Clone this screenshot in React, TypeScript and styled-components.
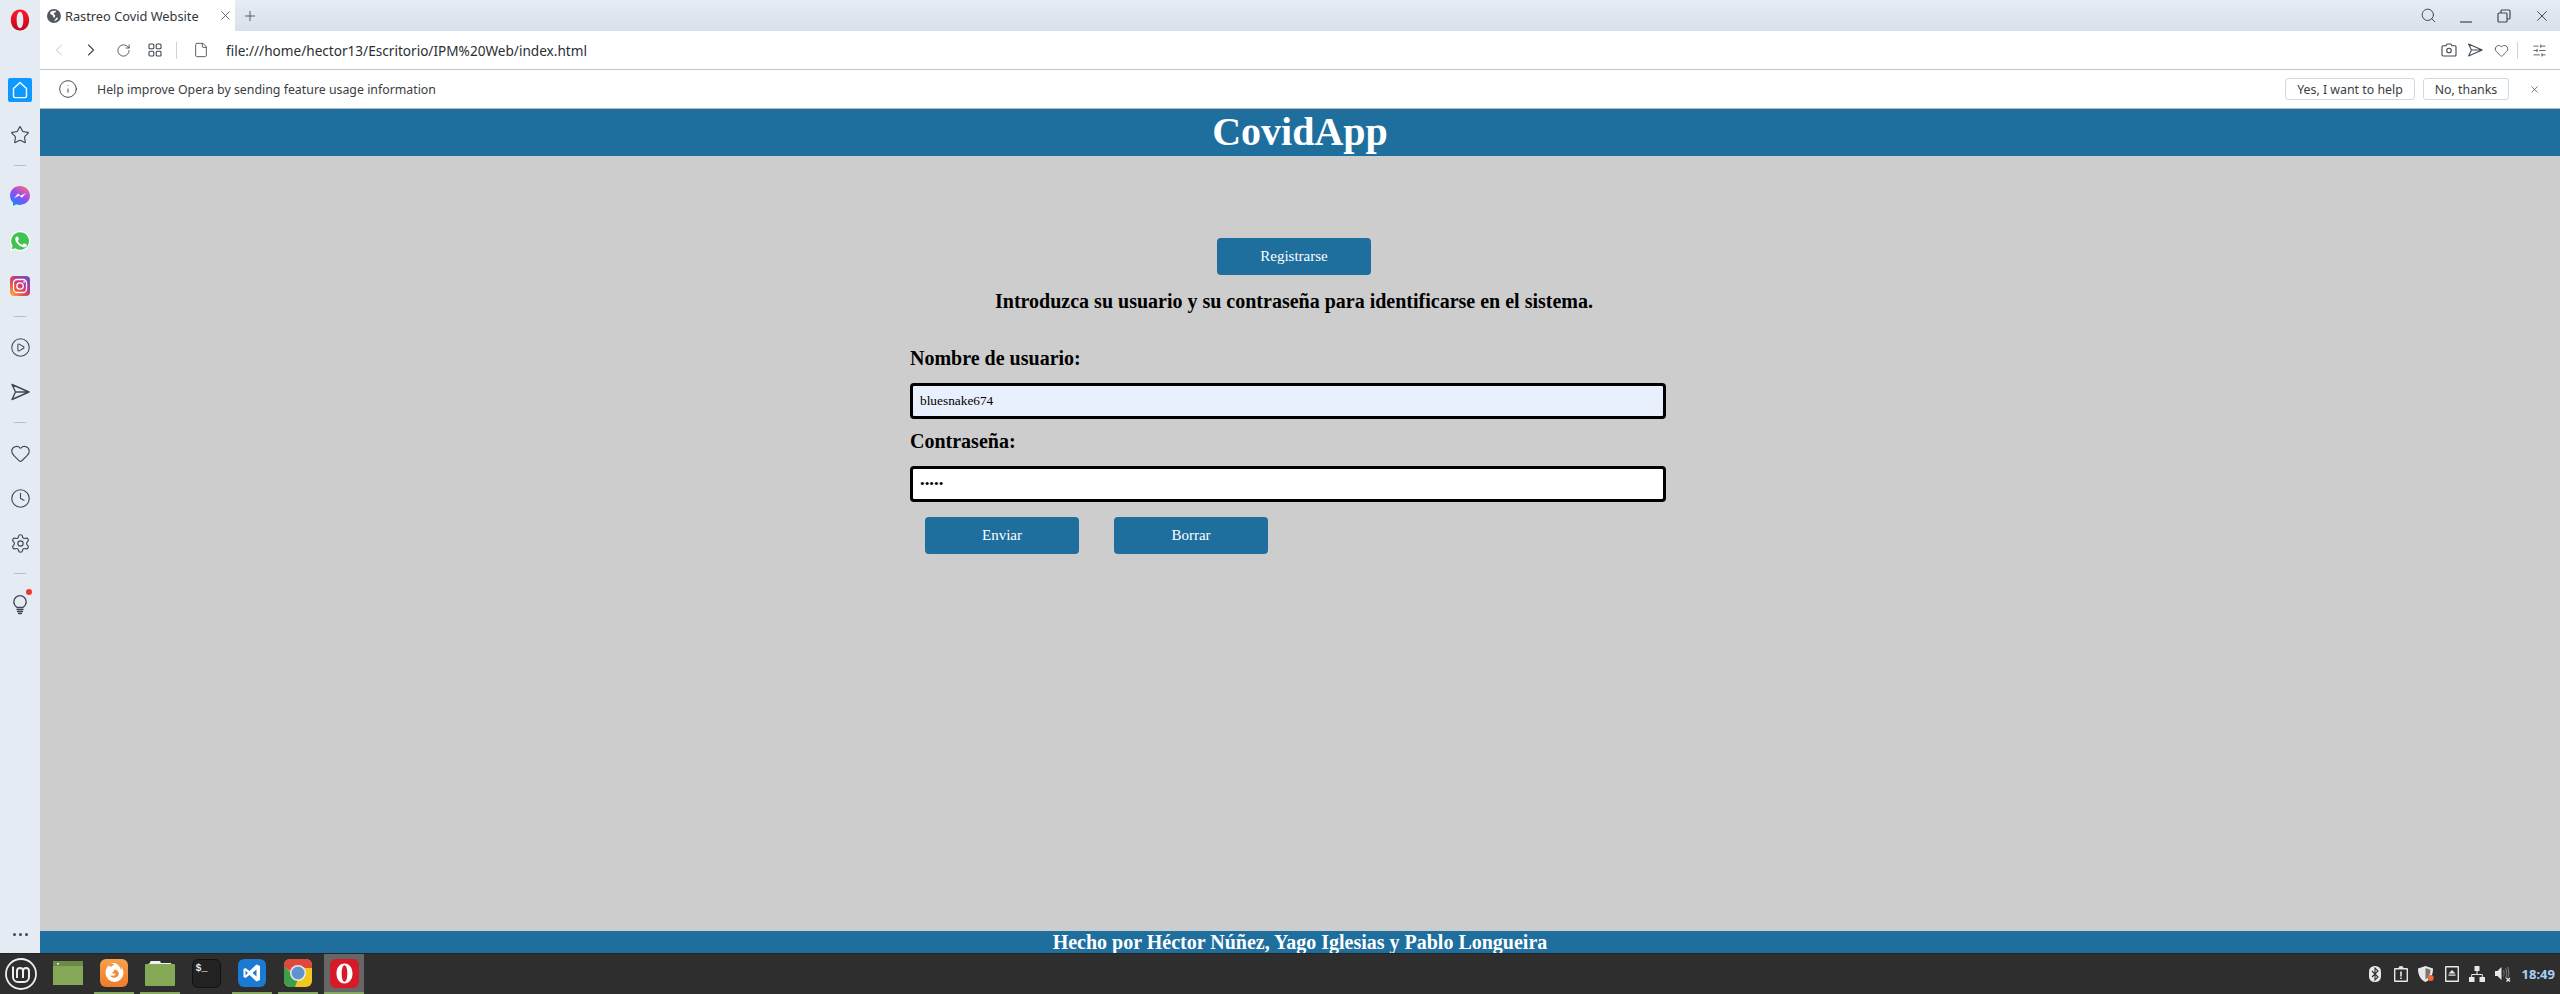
import styled, { createGlobalStyle } from 'styled-components';
import {
  ChevronLeft,
  ChevronRight,
  CirclePlay,
  Clock,
  File,
  Heart,
  Info,
  Plus,
  RotateCw,
  Search,
  Settings,
  SlidersHorizontal,
  Star,
  X,
} from 'lucide-react';

const GlobalStyle = createGlobalStyle`
  html, body {
    margin: 0;
    padding: 0;
    height: 100%;
    overflow: hidden;
  }
  * {
    box-sizing: border-box;
  }
`;

const UI_FONT = '"Noto Sans", "Open Sans", sans-serif';
const PAGE_FONT = '"Liberation Serif", "Times New Roman", serif';
const ICON_COLOR = '#3f4853';
const BRAND_BLUE = '#1e6e9e';

const Screen = styled.div`
  width: 2560px;
  height: 994px;
  display: flex;
  flex-direction: column;
  font-family: ${UI_FONT};
`;

const Desktop = styled.div`
  flex: 1;
  min-height: 0;
  display: flex;
`;

/* left rail */
const Sidebar = styled.aside`
  width: 40px;
  flex: none;
  background: #e4ebf3;
  display: flex;
  flex-direction: column;
  align-items: center;
`;

const RailLogo = styled.div`
  height: 40px;
  margin-bottom: 27.5px;
  display: flex;
  align-items: center;
  justify-content: center;
`;

const RailItem = styled.div`
  position: relative;
  width: 24px;
  height: 45px;
  display: flex;
  align-items: center;
  justify-content: center;
  color: ${ICON_COLOR};
`;

const HomeTile = styled.div`
  width: 24px;
  height: 24px;
  border-radius: 2px;
  background: #0d99ff;
  display: flex;
  align-items: center;
  justify-content: center;
`;

const RailDivider = styled.div`
  width: 12px;
  height: 16px;
  display: flex;
  align-items: center;
  &::before {
    content: '';
    display: block;
    width: 100%;
    height: 1px;
    background: #b6bec8;
  }
`;

const RedDot = styled.span`
  position: absolute;
  top: 7px;
  right: 0;
  width: 6px;
  height: 6px;
  border-radius: 50%;
  background: #f5352b;
`;

const RailMore = styled.div`
  margin-top: auto;
  height: 22px;
  width: 100%;
  display: flex;
  align-items: flex-start;
  justify-content: center;
  gap: 3px;
  padding-top: 2px;
`;

const MoreDot = styled.span`
  width: 3px;
  height: 3px;
  border-radius: 50%;
  background: ${ICON_COLOR};
`;

/* browser frame */
const Browser = styled.div`
  flex: 1;
  min-width: 0;
  display: flex;
  flex-direction: column;
`;

const TabBar = styled.div`
  height: 31px;
  flex: none;
  display: flex;
  align-items: stretch;
  background: linear-gradient(#e5ecf4, #d9e0ea);
`;

const Tab = styled.div`
  width: 195px;
  background: #fff;
  display: flex;
  align-items: center;
  padding-left: 7px;
  color: #33373c;
  font-size: 12.8px;
`;

const TabTitle = styled.span`
  margin-left: 4px;
  width: 151px;
  white-space: nowrap;
`;

const TabAction = styled.div<{ $width: number }>`
  width: ${({ $width }) => $width}px;
  display: flex;
  align-items: center;
  justify-content: center;
  color: ${ICON_COLOR};
`;

const Spacer = styled.div`
  flex: 1;
`;

const AddressBar = styled.div`
  height: 39px;
  flex: none;
  background: #fff;
  border-bottom: 1px solid #bcc3cb;
  display: flex;
  align-items: center;
  padding: 0 7px 0 3px;
`;

const ToolButton = styled.div<{ $width?: number; $dim?: boolean }>`
  width: ${({ $width }) => $width ?? 32}px;
  flex: none;
  display: flex;
  align-items: center;
  justify-content: center;
  color: ${({ $dim }) => ($dim ? '#bfc5cc' : ICON_COLOR)};
`;

const ToolDivider = styled.div<{ $left: number; $right: number }>`
  width: 1px;
  height: 17px;
  flex: none;
  background: #cfd4da;
  margin: 0 ${({ $right }) => $right}px 0 ${({ $left }) => $left}px;
`;

const Url = styled.span`
  flex: 1;
  margin-left: 15px;
  color: #2b2f33;
  font-size: 13.6px;
  white-space: nowrap;
`;

const InfoBar = styled.div`
  height: 39px;
  flex: none;
  background: #fff;
  border-bottom: 1px solid #b5bcc5;
  display: flex;
  align-items: center;
  padding-left: 18px;
  color: #3a3e43;
  font-size: 12.35px;
`;

const InfoText = styled.span`
  margin-left: 19px;
  flex: 1;
`;

const InfoActions = styled.div`
  display: flex;
  gap: 8px;
`;

const InfoButton = styled.button<{ $width: number }>`
  width: ${({ $width }) => $width}px;
  height: 22px;
  padding: 0;
  background: #fff;
  border: 1px solid #d4d8dd;
  border-radius: 3px;
  color: #3a3e43;
  font-family: inherit;
  font-size: 12.35px;
`;

const InfoClose = styled.div`
  width: 51px;
  padding-right: 1px;
  display: flex;
  justify-content: center;
  color: ${ICON_COLOR};
`;

/* the page itself */
const PageHeader = styled.header`
  height: 47px;
  flex: none;
  background: ${BRAND_BLUE};
  color: #fff;
  font-family: ${PAGE_FONT};
  font-size: 40px;
  font-weight: bold;
  line-height: 45px;
  text-align: center;
  overflow: hidden;
`;

const PageMain = styled.main`
  flex: 1;
  min-height: 0;
  background: #cdcdcd;
  font-family: ${PAGE_FONT};
  color: #000;
`;

const Login = styled.section`
  width: 768px;
  margin-left: 870px;
  padding-top: 82px;
`;

const RegisterRow = styled.div`
  display: flex;
  justify-content: center;
`;

const PageButton = styled.button`
  width: 154px;
  height: 37px;
  padding: 0;
  border: none;
  border-radius: 4px;
  background: ${BRAND_BLUE};
  color: #fff;
  font-family: ${PAGE_FONT};
  font-size: 15px;
`;

const Intro = styled.h3`
  margin: 14px 0 0;
  font-size: 20px;
  line-height: 24px;
  font-weight: bold;
  text-align: center;
  white-space: nowrap;
`;

const Form = styled.form`
  margin-top: 33px;
  width: 756px;
`;

const FieldLabel = styled.label<{ $first?: boolean }>`
  display: block;
  margin-top: ${({ $first }) => ($first ? 0 : 10)}px;
  padding-bottom: 1px;
  font-size: 20px;
  line-height: 25px;
  font-weight: bold;
`;

const Field = styled.input<{ $filled?: boolean }>`
  display: block;
  width: 100%;
  height: 36px;
  margin-top: 11px;
  padding: 0 7px;
  border: 3px solid #000;
  border-radius: 4px;
  outline: none;
  background: ${({ $filled }) => ($filled ? '#e8f0fe' : '#fff')};
  color: #000;
  font-family: ${PAGE_FONT};
  font-size: 13.33px;
`;

const FormActions = styled.div`
  margin-top: 15px;
  padding-left: 15px;
  display: flex;
  gap: 35px;
`;

const PageFooter = styled.footer`
  height: 22px;
  flex: none;
  background: ${BRAND_BLUE};
  color: #fff;
  font-family: ${PAGE_FONT};
  font-size: 20px;
  font-weight: bold;
  line-height: 22px;
  text-align: center;
  overflow: hidden;
`;

/* desktop panel */
const Taskbar = styled.div`
  height: 41px;
  flex: none;
  background: #2e2e2e;
  border-top: 1px solid #232323;
  display: flex;
  align-items: stretch;
`;

const MenuButton = styled.div`
  width: 48px;
  padding-right: 6px;
  display: flex;
  align-items: center;
  justify-content: center;
`;

const Launchers = styled.div`
  display: flex;
  gap: 6px;
`;

const Launcher = styled.div<{ $running?: boolean; $active?: boolean }>`
  width: 40px;
  display: flex;
  align-items: center;
  justify-content: center;
  background: ${({ $active }) => ($active ? '#666' : 'transparent')};
  border-bottom: 2px solid ${({ $running }) => ($running ? '#87a962' : 'transparent')};
`;

const TerminalTile = styled.div`
  width: 29px;
  height: 29px;
  border-radius: 6px;
  background: #222;
  border: 1px solid #111;
  color: #e6e6e6;
  font-family: "Liberation Mono", monospace;
  font-size: 10px;
  font-weight: bold;
  line-height: 14px;
  padding: 2px 0 0 3px;
`;

const Tray = styled.div`
  margin-left: auto;
  display: flex;
  align-items: center;
  padding-right: 5px;
`;

const TrayIcon = styled.div`
  width: 25.5px;
  display: flex;
  justify-content: center;
`;

const PanelClock = styled.span`
  margin-left: 6px;
  color: #a8d0f4;
  font-family: "Noto Sans", sans-serif;
  font-size: 13px;
  font-weight: bold;
`;

/* drawn icons */
const OperaLogo = () => (
  <svg width="20" height="22" viewBox="0 0 24 24" preserveAspectRatio="none">
    <defs>
      <linearGradient id="operaRed" x1="0" y1="0" x2="0" y2="1">
        <stop offset="0" stopColor="#ff1b2d" />
        <stop offset="1" stopColor="#c0061a" />
      </linearGradient>
    </defs>
    <path
      fillRule="evenodd"
      fill="url(#operaRed)"
      d="M12 0.5C5.5 0.5 1 5.6 1 12s4.500 11.500 11 11.500S23 18.400 23 12 18.500 0.500 12 0.500zm0 2.600c2.600 0 4 4 4 8.900s-1.400 8.900-4 8.900-4-4-4-8.900 1.400-8.900 4-8.900z"
    />
  </svg>
);

const HomeIcon = () => (
  <svg width="20" height="20" viewBox="0 0 20 20" fill="none" stroke="#fff" strokeWidth="1.4" strokeLinejoin="round">
    <path d="M10 2.5 16.5 8.5V16a1.6 1.6 0 0 1-1.6 1.6H5.100A1.600 1.600 0 0 1 3.500 16V8.500z" />
  </svg>
);

const PlaneIcon = ({ size = 20, width = 1.4 }: { size?: number; width?: number }) => (
  <svg width={size} height={size} viewBox="0 0 20 20" fill="none" stroke={ICON_COLOR} strokeWidth={width} strokeLinejoin="round">
    <path d="M2 2.500 19 10 2 17.500 5.500 10zM5.500 10H19" />
  </svg>
);

const MessengerIcon = () => (
  <svg width="20" height="20" viewBox="0 0 20 20">
    <defs>
      <linearGradient id="msg" x1="0.2" y1="1" x2="0.8" y2="0">
        <stop offset="0" stopColor="#0a8cff" />
        <stop offset="0.5" stopColor="#8f4cf5" />
        <stop offset="1" stopColor="#ff6a78" />
      </linearGradient>
    </defs>
    <path
      fill="url(#msg)"
      d="M10 0C4.400 0 0 4.100 0 9.600c0 2.900 1.200 5.400 3.100 7.100V20l3-1.700c1.200.4 2.500.6 3.900.6 5.600 0 10-4.100 10-9.300S15.600 0 10 0z"
    />
    <path fill="#fff" d="M4 12.200 8 7.500l2.600 2.200L15.900 7l-4 4.800-2.700-2.200z" />
  </svg>
);

const WhatsappIcon = () => (
  <svg width="20" height="20" viewBox="0 0 20 20">
    <path fill="#fff" d="M10 0a10 10 0 0 0-8.600 15L0 20l5.200-1.300A10 10 0 1 0 10 0z" />
    <path fill="#3fc351" d="M10 1.200a8.800 8.800 0 0 0-7.400 13.500l-1 3.600 3.700-1A8.800 8.800 0 1 0 10 1.200z" />
    <path
      fill="#fff"
      d="M7.200 5.400c-.3 0-.7.1-1 .5-.4.4-1 1-1 2.400s1 2.800 1.200 3c.2.2 2 3.200 5 4.300 2.400 1 2.900.8 3.400.7.500 0 1.700-.7 1.900-1.300.2-.6.2-1.200.2-1.300-.1-.2-.3-.2-.6-.4l-2-.9c-.3-.1-.5-.1-.7.2l-.9 1.100c-.2.200-.4.200-.7.100-.3-.2-1.300-.500-2.400-1.500-.9-.8-1.500-1.800-1.700-2.100-.2-.3 0-.5.100-.6l.5-.6c.1-.2.2-.3.3-.5.1-.2 0-.4 0-.5L8 6c-.2-.5-.5-.6-.8-.6z"
    />
  </svg>
);

const InstagramIcon = () => (
  <svg width="20" height="20" viewBox="0 0 20 20">
    <defs>
      <linearGradient id="insta" x1="0" y1="1" x2="1" y2="0">
        <stop offset="0" stopColor="#fdc04f" />
        <stop offset="0.3" stopColor="#ee5a3f" />
        <stop offset="0.6" stopColor="#c1358c" />
        <stop offset="1" stopColor="#5c55c9" />
      </linearGradient>
    </defs>
    <rect width="20" height="20" rx="4" fill="url(#insta)" />
    <rect x="3.5" y="3.5" width="13" height="13" rx="3.5" fill="none" stroke="#fff" strokeWidth="1.3" />
    <circle cx="10" cy="10" r="3.2" fill="none" stroke="#fff" strokeWidth="1.3" />
    <circle cx="14.1" cy="5.9" r="0.9" fill="#fff" />
  </svg>
);

const BulbIcon = () => (
  <svg width="20" height="24" viewBox="0 0 20 24" fill="none" stroke={ICON_COLOR} strokeWidth="1.3" strokeLinecap="round">
    <path d="M7 15.500C5 14 3.800 12.200 3.800 9.800a6.200 6.200 0 0 1 12.400 0c0 2.400-1.200 4.200-3.200 5.700z" />
    <path d="M7 17.500h6M7.500 19.500h5M8.500 21.500h3" />
  </svg>
);

const GlobeIcon = () => (
  <svg width="14" height="14" viewBox="0 0 14 14">
    <circle cx="7" cy="7" r="7" fill="#53585e" />
    <path fill="#fff" d="M6 1.600 3.200 3l.4 2.200L6 6.400l.4 2 1.400.2.600-2.400L6.600 5 7.600 3.500 9.400 3 8.500 1.600zM9 9.200l-1.800 3 2.300-1 1.700-2.200-1-.6z" />
  </svg>
);

const GridIcon = () => (
  <svg width="14" height="14" viewBox="0 0 14 14" fill="none" stroke={ICON_COLOR} strokeWidth="1.1">
    <rect x="1" y="1" width="4.8" height="4.8" rx="1" />
    <rect x="8.2" y="1" width="4.8" height="4.8" rx="1" />
    <rect x="1" y="8.2" width="4.8" height="4.8" rx="1" />
    <rect x="8.2" y="8.2" width="4.8" height="4.8" rx="1" />
  </svg>
);

const CameraIcon = () => (
  <svg width="16" height="16" viewBox="0 0 16 16" fill="none" stroke={ICON_COLOR} strokeWidth="1.1" strokeLinejoin="round">
    <path d="M2 3.800h3l1-1.800h4l1 1.800h3a1 1 0 0 1 1 1V13a1 1 0 0 1-1 1H2a1 1 0 0 1-1-1V4.800a1 1 0 0 1 1-1z" />
    <circle cx="8" cy="8.500" r="2.300" />
  </svg>
);

const RestoreIcon = () => (
  <svg width="14" height="14" viewBox="0 0 14 14" fill="none" stroke={ICON_COLOR} strokeWidth="1.2">
    <rect x="1" y="4" width="9" height="9" rx="1" />
    <path d="M4 4V2a1 1 0 0 1 1-1h7a1 1 0 0 1 1 1v7a1 1 0 0 1-1 1h-2" />
  </svg>
);

const MinimizeIcon = () => (
  <svg width="14" height="14" viewBox="0 0 14 14" stroke={ICON_COLOR} strokeWidth="1.2">
    <path d="M1 13h12" />
  </svg>
);

const MintLogo = () => (
  <svg width="32" height="32" viewBox="0 0 32 32" fill="none" stroke="#eee">
    <circle cx="16" cy="16" r="15" strokeWidth="1.8" />
    <path strokeWidth="2" d="M8 8.500v10.500a5 5 0 0 0 5 5h6a5 5 0 0 0 5-5v-6a3 3 0 0 0-6 0v7M18 13a3 3 0 0 0-6 0v7" />
  </svg>
);

const WindowIcon = () => (
  <svg width="30" height="24" viewBox="0 0 30 24">
    <rect width="30" height="24" fill="#86a957" />
    <rect width="30" height="5" fill="#6c8a45" />
    <rect x="4" y="2" width="2" height="1.5" fill="#eee" />
  </svg>
);

const FirefoxIcon = () => (
  <svg width="28" height="28" viewBox="0 0 28 28">
    <defs>
      <linearGradient id="fx" x1="0" y1="0" x2="0" y2="1">
        <stop offset="0" stopColor="#f7a04a" />
        <stop offset="1" stopColor="#ee7c2b" />
      </linearGradient>
    </defs>
    <rect width="28" height="28" rx="6" fill="url(#fx)" />
    <path
      fill="#fff"
      d="M14 4c-1 0-2.300.3-3 .7 1.500 0 3 .5 3.600 1.300-1.700.2-3 1-3.200 2.100-1-.2-2-.7-2.600-1.500C7 8 5.500 10.500 5.500 14a9 9 0 0 0 18 0c0-2.300-.9-4.800-2.600-6.600.6 1.500.6 3 .3 3.900C20 8 17.500 4 14 4zm.5 6.500c2.300 0 4.300 1.700 4.300 4s-2 4.200-4.600 4.200c-2.300 0-3.900-1.300-4.200-2.800 1 .9 2.700 1.200 4 .6 1-.4 1.500-1.100 1.500-1.800-1.200.1-3-.3-3.500-1.300.5-.1 1.200-.3 1.500-.9z"
    />
  </svg>
);

const FolderIcon = () => (
  <svg width="30" height="28" viewBox="0 0 30 28">
    <path fill="#f0f0f0" d="M3 5l2-1V3l1-1h9l1 2h10l1 3H3z" />
    <path fill="#86a957" d="M1 5h28a1 1 0 0 1 1 1v20a1 1 0 0 1-1 1H1a1 1 0 0 1-1-1V6a1 1 0 0 1 1-1z" />
  </svg>
);

const VscodeIcon = () => (
  <svg width="28" height="28" viewBox="0 0 28 28">
    <rect width="28" height="28" rx="6" fill="#1a7ad4" />
    <path
      fill="#fff"
      d="M18.500 5.500 22 7v14l-3.500 1.500-7-6.500-4 3L5.500 18v-8l2-1 4 3zM18.500 10.500 14.500 14l4 3.500zM7.500 11.500v5l2.400-2.500z"
      fillRule="evenodd"
    />
  </svg>
);

const ChromeIcon = () => (
  <svg width="28" height="28" viewBox="0 0 28 28">
    <rect width="28" height="28" rx="6" fill="#f2c81f" />
    <path fill="#e0483d" d="M6 0h16a6 6 0 0 1 6 6v3H14a6 6 0 0 0-6 4L0 8V6a6 6 0 0 1 6-6z" />
    <path fill="#3f9e4b" d="M0 7l8 8 6 5-3 8H6a6 6 0 0 1-6-6z" />
    <circle cx="14" cy="14" r="8" fill="#e8e8e8" />
    <circle cx="14" cy="14" r="6.5" fill="#5d94cf" />
  </svg>
);

const OperaTile = () => (
  <svg width="29" height="29" viewBox="0 0 29 29">
    <rect width="29" height="29" rx="6" fill="#d81927" />
    <path
      fillRule="evenodd"
      fill="#fff"
      d="M14.500 4.500c-5 0-8 4.400-8 10s3 10 8 10 8-4.400 8-10-3-10-8-10zm0 1.800c1.900 0 2.800 3.700 2.800 8.200s-.9 8.200-2.800 8.200-2.800-3.700-2.800-8.200.9-8.200 2.800-8.200z"
    />
  </svg>
);

const BluetoothTray = () => (
  <svg width="12" height="16" viewBox="0 0 12 16">
    <rect width="12" height="16" rx="5.5" fill="#e8e8e8" />
    <path d="M3 5l6 6-3 3V2l3 3-6 6" fill="none" stroke="#2e2e2e" strokeWidth="1.1" />
  </svg>
);

const ClipboardTray = () => (
  <svg width="14" height="16" viewBox="0 0 14 16">
    <path
      fill="#e8e8e8"
      fillRule="evenodd"
      d="M1 2h3.500a2.500 2 0 0 1 5 0H13a1 1 0 0 1 1 1v12a1 1 0 0 1-1 1H1a1 1 0 0 1-1-1V3a1 1 0 0 1 1-1zm.4 1.500v11h11.200v-11zM6.200 5.500h1.600v5H6.200zM6.200 11.500h1.600v1.500H6.200z"
    />
  </svg>
);

const ShieldTray = () => (
  <svg width="17" height="16" viewBox="0 0 17 16">
    <path fill="#e8e8e8" d="M7.500 0 15 2.500c0 6-2 11-7.500 13.500C2 13.500 0 8.500 0 2.500z" />
    <path fill="#777" d="M7.500 2 12.500 3.800c0 4-1.500 7.700-5 9.700z" />
    <circle cx="12.700" cy="12" r="3" fill="#f26a2e" />
  </svg>
);

const EjectTray = () => (
  <svg width="14" height="16" viewBox="0 0 14 16">
    <path
      fill="#e8e8e8"
      fillRule="evenodd"
      d="M1 0h12a1 1 0 0 1 1 1v14a1 1 0 0 1-1 1H1a1 1 0 0 1-1-1V1a1 1 0 0 1 1-1zm.4 1.400v13.200h11.200V1.400zM7 4l3.500 3.500h-7zM3.500 8.500h7v1.300h-7z"
    />
  </svg>
);

const NetworkTray = () => (
  <svg width="16" height="16" viewBox="0 0 16 16">
    <path fill="#e8e8e8" d="M5.500 0h5v5h-5zM0 11h5.500v5H0zM10.500 11H16v5h-5.500z" />
    <path fill="none" stroke="#e8e8e8" d="M8 5v3.500M2.700 11V8.500h10.600V11" />
  </svg>
);

const VolumeTray = () => (
  <svg width="16" height="16" viewBox="0 0 16 16">
    <path fill="#e8e8e8" d="M0 5h2.500L6.500 1v13l-4-4H0z" />
    <path fill="none" stroke="#777" strokeWidth="1.1" d="M8.500 4.500c1 2 1 4 0 6M10.500 2.500c1.500 3 1.500 7 0 10M12.500 1c1.500 4 1.500 8 .6 10" />
    <path stroke="#e8e8e8" strokeWidth="1.4" d="M11.500 12l3.500 3.500M15 12l-3.500 3.500" />
  </svg>
);

export default function App() {
  return (
    <Screen>
      <GlobalStyle />
      <Desktop>
        <Sidebar>
          <RailLogo>
            <OperaLogo />
          </RailLogo>
          <RailItem>
            <HomeTile>
              <HomeIcon />
            </HomeTile>
          </RailItem>
          <RailItem>
            <Star size={20} strokeWidth={1.4} />
          </RailItem>
          <RailDivider />
          <RailItem>
            <MessengerIcon />
          </RailItem>
          <RailItem>
            <WhatsappIcon />
          </RailItem>
          <RailItem>
            <InstagramIcon />
          </RailItem>
          <RailDivider />
          <RailItem>
            <CirclePlay size={21} strokeWidth={1.2} />
          </RailItem>
          <RailItem>
            <PlaneIcon />
          </RailItem>
          <RailDivider />
          <RailItem>
            <Heart size={21} strokeWidth={1.3} />
          </RailItem>
          <RailItem>
            <Clock size={21} strokeWidth={1.3} />
          </RailItem>
          <RailItem>
            <Settings size={21} strokeWidth={1.3} />
          </RailItem>
          <RailDivider />
          <RailItem>
            <BulbIcon />
            <RedDot />
          </RailItem>
          <RailMore>
            <MoreDot />
            <MoreDot />
            <MoreDot />
          </RailMore>
        </Sidebar>

        <Browser>
          <TabBar>
            <Tab>
              <GlobeIcon />
              <TabTitle>Rastreo Covid Website</TabTitle>
              <TabAction $width={20}>
                <X size={15} strokeWidth={1.3} />
              </TabAction>
            </Tab>
            <TabAction $width={30}>
              <Plus size={16} strokeWidth={1.3} />
            </TabAction>
            <Spacer />
            <TabAction $width={38}>
              <Search size={17} strokeWidth={1.4} />
            </TabAction>
            <TabAction $width={38}>
              <MinimizeIcon />
            </TabAction>
            <TabAction $width={38}>
              <RestoreIcon />
            </TabAction>
            <TabAction $width={37}>
              <X size={18} strokeWidth={1.3} />
            </TabAction>
          </TabBar>

          <AddressBar>
            <ToolButton $dim>
              <ChevronLeft size={20} strokeWidth={1.2} />
            </ToolButton>
            <ToolButton>
              <ChevronRight size={20} strokeWidth={1.3} />
            </ToolButton>
            <ToolButton>
              <RotateCw size={15} strokeWidth={1.4} />
            </ToolButton>
            <ToolButton>
              <GridIcon />
            </ToolButton>
            <ToolDivider $left={5} $right={14} />
            <ToolButton $width={20}>
              <File size={16} strokeWidth={1.3} />
            </ToolButton>
            <Url>file:///home/hector13/Escritorio/IPM%20Web/index.html</Url>
            <ToolButton $width={26}>
              <CameraIcon />
            </ToolButton>
            <ToolButton $width={26}>
              <PlaneIcon size={16} width={1.3} />
            </ToolButton>
            <ToolButton $width={26}>
              <Heart size={15} strokeWidth={1.3} />
            </ToolButton>
            <ToolDivider $left={3} $right={7} />
            <ToolButton $width={28}>
              <SlidersHorizontal size={15} strokeWidth={1.3} />
            </ToolButton>
          </AddressBar>

          <InfoBar>
            <Info size={20} strokeWidth={1.1} />
            <InfoText>Help improve Opera by sending feature usage information</InfoText>
            <InfoActions>
              <InfoButton type="button" $width={130}>
                Yes, I want to help
              </InfoButton>
              <InfoButton type="button" $width={86}>
                No, thanks
              </InfoButton>
            </InfoActions>
            <InfoClose>
              <X size={11} strokeWidth={1.5} />
            </InfoClose>
          </InfoBar>

          <PageHeader>CovidApp</PageHeader>

          <PageMain>
            <Login>
              <RegisterRow>
                <PageButton type="button">Registrarse</PageButton>
              </RegisterRow>
              <Intro>Introduzca su usuario y su contraseña para identificarse en el sistema.</Intro>
              <Form>
                <FieldLabel $first htmlFor="user">
                  Nombre de usuario:
                </FieldLabel>
                <Field id="user" type="text" defaultValue="bluesnake674" $filled />
                <FieldLabel htmlFor="pass">Contraseña:</FieldLabel>
                <Field id="pass" type="password" defaultValue="12345" />
                <FormActions>
                  <PageButton type="button">Enviar</PageButton>
                  <PageButton type="button">Borrar</PageButton>
                </FormActions>
              </Form>
            </Login>
          </PageMain>

          <PageFooter>Hecho por Héctor Núñez, Yago Iglesias y Pablo Longueira</PageFooter>
        </Browser>
      </Desktop>

      <Taskbar>
        <MenuButton>
          <MintLogo />
        </MenuButton>
        <Launchers>
          <Launcher>
            <WindowIcon />
          </Launcher>
          <Launcher $running>
            <FirefoxIcon />
          </Launcher>
          <Launcher $running>
            <FolderIcon />
          </Launcher>
          <Launcher>
            <TerminalTile>$_</TerminalTile>
          </Launcher>
          <Launcher $running>
            <VscodeIcon />
          </Launcher>
          <Launcher $running>
            <ChromeIcon />
          </Launcher>
          <Launcher $running $active>
            <OperaTile />
          </Launcher>
        </Launchers>
        <Tray>
          <TrayIcon>
            <BluetoothTray />
          </TrayIcon>
          <TrayIcon>
            <ClipboardTray />
          </TrayIcon>
          <TrayIcon>
            <ShieldTray />
          </TrayIcon>
          <TrayIcon>
            <EjectTray />
          </TrayIcon>
          <TrayIcon>
            <NetworkTray />
          </TrayIcon>
          <TrayIcon>
            <VolumeTray />
          </TrayIcon>
          <PanelClock>18:49</PanelClock>
        </Tray>
      </Taskbar>
    </Screen>
  );
}
